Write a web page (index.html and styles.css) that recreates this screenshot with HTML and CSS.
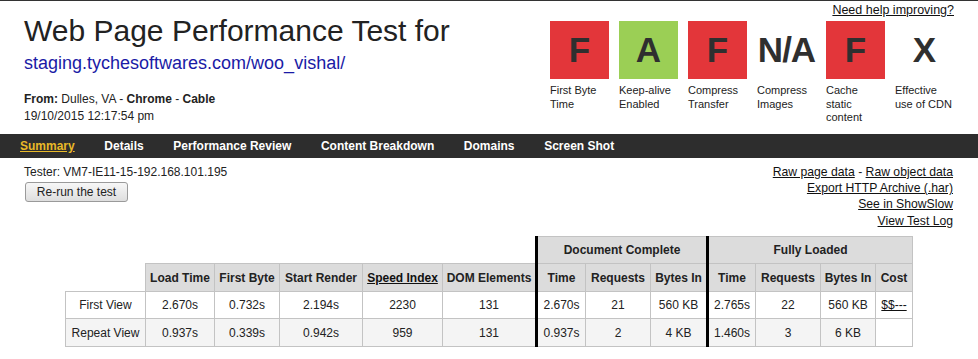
FILE: index.html
```html
<!DOCTYPE html>
<html lang="en">
<head>
<meta charset="utf-8">
<title>Web Page Performance Test</title>
<link rel="stylesheet" href="styles.css">
</head>
<body>
<div class="page">
  <header class="head">
    <div class="head-left">
      <h1 class="title">Web Page Performance Test for</h1>
      <a class="url" href="#">staging.tychesoftwares.com/woo_vishal/</a>
      <div class="from"><b>From:</b> Dulles, VA - <b>Chrome</b> - <b>Cable</b></div>
      <div class="date">19/10/2015 12:17:54 pm</div>
    </div>
    <div class="head-right">
      <a class="help" href="#">Need help improving?</a>
      <ul class="grades">
        <li class="grade"><div class="box red">F</div><div class="label">First Byte<br>Time</div></li>
        <li class="grade"><div class="box green">A</div><div class="label">Keep-alive<br>Enabled</div></li>
        <li class="grade"><div class="box red">F</div><div class="label">Compress<br>Transfer</div></li>
        <li class="grade"><div class="box na">N/A</div><div class="label">Compress<br>Images</div></li>
        <li class="grade"><div class="box red">F</div><div class="label">Cache<br>static<br>content</div></li>
        <li class="grade"><div class="box">X</div><div class="label">Effective<br>use of CDN</div></li>
      </ul>
    </div>
  </header>

  <nav class="nav">
    <a class="nav-item active" href="#">Summary</a>
    <a class="nav-item" href="#">Details</a>
    <a class="nav-item" href="#">Performance Review</a>
    <a class="nav-item" href="#">Content Breakdown</a>
    <a class="nav-item" href="#">Domains</a>
    <a class="nav-item" href="#">Screen Shot</a>
  </nav>

  <div class="info">
    <div class="info-left">
      <div class="tester">Tester: VM7-IE11-15-192.168.101.195</div>
      <button class="rerun" type="button">Re-run the test</button>
    </div>
    <div class="info-right">
      <div><a href="#">Raw page data</a> - <a href="#">Raw object data</a></div>
      <div><a href="#">Export HTTP Archive (.har)</a></div>
      <div><a href="#">See in ShowSlow</a></div>
      <div><a href="#">View Test Log</a></div>
    </div>
  </div>

  <table class="results">
    <colgroup>
      <col class="c80"><col class="c69"><col class="c65"><col class="c83"><col class="c80"><col class="c94">
      <col class="c49"><col class="c65"><col class="c57">
      <col class="c48"><col class="c65"><col class="c55"><col class="c37">
    </colgroup>
    <tr>
      <td class="empty" colspan="6"></td>
      <th class="thick" colspan="3">Document Complete</th>
      <th class="thick" colspan="4">Fully Loaded</th>
    </tr>
    <tr>
      <td class="empty"></td>
      <th>Load Time</th>
      <th>First Byte</th>
      <th>Start Render</th>
      <th><a href="#">Speed Index</a></th>
      <th>DOM Elements</th>
      <th class="thick">Time</th>
      <th>Requests</th>
      <th>Bytes In</th>
      <th class="thick">Time</th>
      <th>Requests</th>
      <th>Bytes In</th>
      <th>Cost</th>
    </tr>
    <tr class="row-first">
      <td>First View</td>
      <td>2.670s</td>
      <td>0.732s</td>
      <td>2.194s</td>
      <td>2230</td>
      <td>131</td>
      <td class="thick">2.670s</td>
      <td>21</td>
      <td>560 KB</td>
      <td class="thick">2.765s</td>
      <td>22</td>
      <td>560 KB</td>
      <td><a href="#">$$---</a></td>
    </tr>
    <tr class="row-repeat">
      <td>Repeat View</td>
      <td>0.937s</td>
      <td>0.339s</td>
      <td>0.942s</td>
      <td>959</td>
      <td>131</td>
      <td class="thick">0.937s</td>
      <td>2</td>
      <td>4 KB</td>
      <td class="thick">1.460s</td>
      <td>3</td>
      <td>6 KB</td>
      <td class="blank"></td>
    </tr>
  </table>
</div>
</body>
</html>
```

FILE: styles.css
```css
html, body {
  margin: 0;
  padding: 0;
  background: #fff;
}

body {
  font-family: "Liberation Sans", Arial, sans-serif;
  color: #222;
  font-size: 12px;
}

.page {
  border-top: 1px solid #333;
}

a {
  color: #111;
}

/* ---------- header ---------- */
.head {
  display: flex;
  justify-content: space-between;
  padding: 0 24px 0 24px;
}

.head-left {
  display: flex;
  flex-direction: column;
}

.title {
  margin: 12.8px 0 0 0;
  font-size: 30px;
  line-height: 33px;
  font-weight: normal;
  color: #222;
}

.url {
  display: block;
  margin-top: 5.8px;
  font-size: 18px;
  line-height: 21px;
  color: #1a1aa6;
  text-decoration: none;
}

.from {
  margin-top: 17px;
  line-height: 17px;
}

.date {
  line-height: 17px;
}

.head-right {
  display: flex;
  flex-direction: column;
  align-items: flex-end;
  padding-top: 2.4px;
}

.help {
  font-size: 12.5px;
  line-height: 15px;
  color: #111;
}

.grades {
  list-style: none;
  margin: 2.6px 0 0 0;
  padding: 0;
  display: flex;
  gap: 10px;
}

.grade {
  width: 59px;
}

.box {
  width: 59px;
  height: 58px;
  line-height: 58px;
  text-align: center;
  font-size: 35px;
  font-weight: bold;
  color: #2f2f2f;
}

.box.na {
  letter-spacing: -1px;
}

.box.red {
  background: #e3363a;
}

.box.green {
  background: #9bcf55;
}

.label {
  margin-top: 5.5px;
  font-size: 11px;
  line-height: 13.2px;
  color: #222;
}

/* ---------- nav ---------- */
.nav {
  margin-top: 9.4px;
  height: 24px;
  background: #2d2d2d;
  display: flex;
  gap: 29.6px;
  padding-left: 20px;
}

.nav-item {
  color: #fff;
  font-weight: bold;
  font-size: 12px;
  line-height: 24px;
  text-decoration: none;
}

.nav-item.active {
  color: #e9b928;
  text-decoration: underline;
}

/* ---------- info ---------- */
.info {
  display: flex;
  justify-content: space-between;
  margin-top: 5.7px;
  padding: 0 25px 0 24px;
}

.tester {
  line-height: 16.3px;
}

.rerun {
  display: block;
  margin: 2px 0 0 1px;
  width: 103px;
  height: 20px;
  padding: 0;
  font-family: "Liberation Sans", Arial, sans-serif;
  font-size: 12px;
  color: #222;
  background: linear-gradient(#f7f7f7, #dedede);
  border: 1px solid #9a9a9a;
  border-radius: 3px;
}

.info-right {
  text-align: right;
  line-height: 16.3px;
  font-size: 12.2px;
}

/* ---------- table ---------- */
.results {
  margin: 7.1px auto 0 auto;
  width: 847px;
  table-layout: fixed;
  border-collapse: collapse;
  font-size: 12px;
}

.c80 { width: 80px; }
.c69 { width: 69px; }
.c65 { width: 65px; }
.c83 { width: 83px; }
.c94 { width: 94px; }
.c49 { width: 49px; }
.c57 { width: 57px; }
.c48 { width: 48px; }
.c55 { width: 55px; }
.c37 { width: 37px; }

.results th,
.results td {
  height: 26.5px;
  padding: 0;
  text-align: center;
  vertical-align: middle;
  border: 1px solid #c3c3c3;
  white-space: nowrap;
  overflow: hidden;
}

.results th {
  background: #dcdcdc;
  font-weight: bold;
  color: #222;
}

.results th a {
  color: #111;
}

.results .empty {
  border: none;
  background: transparent;
}

.results .thick {
  border-left: 3px solid #000;
}

.row-first td {
  background: #fff;
}

.row-repeat td {
  background: #f4f4f4;
}

.row-repeat td.blank {
  background: #fff;
}
```
